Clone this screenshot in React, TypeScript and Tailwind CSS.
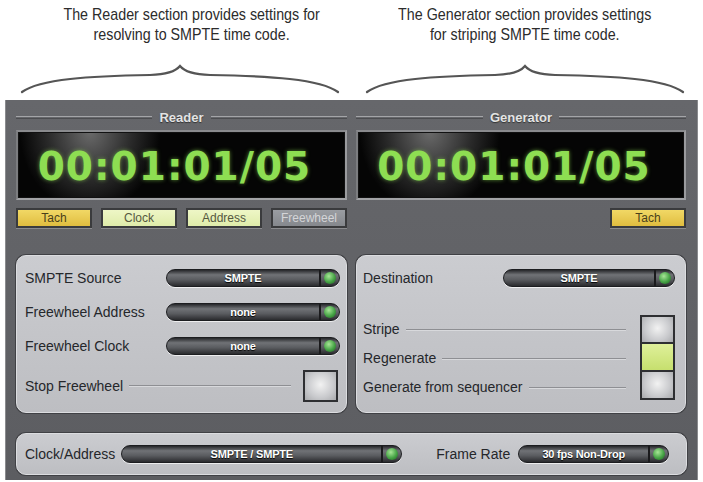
import React from "react";

const Popup = ({ value, className }: { value: string; className: string }) => (
  <div
    className={
      "flex h-[18px] items-center rounded-full border border-[#1c1d20] bg-[linear-gradient(#26272a,#707276_30%,#5a5c60_60%,#2a2b2e)] shadow-[0_1px_0_rgba(255,255,255,0.7)] " +
      className
    }
  >
    <span className="flex-1 text-center text-[11px] font-bold leading-none tracking-[-0.2px] text-white [text-shadow:0_1px_1px_#000]">
      {value}
    </span>
    <div className="h-full w-[2px] bg-[#1a1a1c]" />
    <div className="mx-[3px] h-[12px] w-[12px] rounded-full bg-[radial-gradient(circle_at_40%_35%,#a7e596,#45a345_55%,#1f5a1f)]" />
  </div>
);

const SectionTitle = ({ title }: { title: string }) => (
  <div className="flex h-[14px] items-center gap-[7px]">
    <div className="h-[3px] flex-1 border-t border-b border-t-[#a4a5a8] border-b-[#4c4d50]" />
    <span className="text-[13px] font-bold leading-none text-[#e4e4e4] [text-shadow:0_1px_1px_#333]">
      {title}
    </span>
    <div className="h-[3px] flex-1 border-t border-b border-t-[#a4a5a8] border-b-[#4c4d50]" />
  </div>
);

const Display = () => (
  <div className="flex h-[70px] items-center justify-center border-2 border-t-[#8a8b8e] border-l-[#7c7d80] border-r-[#9a9b9e] border-b-[#a2a3a6] bg-[radial-gradient(ellipse_70px_80px_at_22%_0%,#6a6a6a,#2a2a2a_60%,#050505_100%)] shadow-[inset_0_0_0_1px_#111]">
    <span className="mr-[14px] pt-[2px] font-['DejaVu_Sans',sans-serif] text-[39px] font-bold leading-none tracking-[1px] text-[#8ede52] [text-shadow:0_0_4px_rgba(140,220,80,0.6)]">
      00:01:01/05
    </span>
  </div>
);

const Ind = ({ label, className }: { label: string; className: string }) => (
  <div
    className={
      "flex h-[20px] items-center justify-center border-2 border-[#3a3b3d] text-[12px] leading-none shadow-[0_1px_0_rgba(255,255,255,0.25)] " +
      className
    }
  >
    {label}
  </div>
);

const Line = () => <div className="mx-[6px] h-[2px] flex-1 border-t border-b border-t-[#8e8f93] border-b-[#d8d9dc]" />;

const Check = ({ className }: { className: string }) => (
  <div className={"border-2 border-[#2e2f32] " + className} />
);

const Brace = () => (
  <svg width="320" height="30" viewBox="0 0 320 30" className="block">
    <path
      d="M2,28 C20,15 70,12 130,11 C148,10.5 156,7 160,2 C164,7 172,10.5 190,11 C250,12 300,15 318,28"
      fill="none"
      stroke="#555"
      strokeWidth="2.2"
      strokeLinecap="round"
    />
  </svg>
);

export default function App() {
  return (
    <div className="h-[482px] w-[703px] overflow-hidden bg-white font-['Liberation_Sans',Arial,sans-serif]">
      {/* captions */}
      <div className="flex h-[100px] gap-[27px] px-[20px] pt-[5px]">
        <div className="flex w-[320px] flex-col items-center">
          <div className="ml-[24px] h-[42px] scale-x-[0.84] whitespace-nowrap text-center text-[17px] leading-[20px] text-[#2c2c2c]">
            The Reader section provides settings for
            <br />
            resolving to SMPTE time code.
          </div>
          <div className="mt-[17px]">
            <Brace />
          </div>
        </div>
        <div className="flex w-[316px] flex-col items-center">
          <div className="h-[42px] scale-x-[0.84] whitespace-nowrap text-center text-[17px] leading-[20px] text-[#2c2c2c]">
            The Generator section provides settings
            <br />
            for striping SMPTE time code.
          </div>
          <div className="mt-[17px]">
            <Brace />
          </div>
        </div>
      </div>

      {/* main panel */}
      <div className="mx-[5px] flex h-[380px] flex-col border-l border-r border-[#8a8b8e] bg-[linear-gradient(#66676b,#5c5d61)] px-[10px] pt-[10px]">
        <div className="grid grid-cols-[331px_330px] gap-[9px]">
          {/* Reader */}
          <div className="flex flex-col">
            <SectionTitle title="Reader" />
            <div className="mt-[6px]">
              <Display />
            </div>
            <div className="mt-[8px] grid grid-cols-4 gap-[9px]">
              <Ind label="Tach" className="bg-[linear-gradient(#f1d866,#e0bd3f)] text-[#4a3f1a]" />
              <Ind label="Clock" className="bg-[linear-gradient(#eef6c6,#dfecaa)] text-[#55583f]" />
              <Ind label="Address" className="bg-[linear-gradient(#eef6c6,#dfecaa)] text-[#55583f]" />
              <Ind label="Freewheel" className="bg-[linear-gradient(#9a9da2,#85888d)] text-[#d4d5d8]" />
            </div>
          </div>
          {/* Generator */}
          <div className="flex flex-col">
            <SectionTitle title="Generator" />
            <div className="mt-[6px]">
              <Display />
            </div>
            <div className="mt-[8px] flex justify-end">
              <Ind label="Tach" className="w-[76px] bg-[linear-gradient(#f1d866,#e0bd3f)] text-[#4a3f1a]" />
            </div>
          </div>
        </div>

        {/* settings panels */}
        <div className="mt-[27px] grid grid-cols-[331px_330px] gap-[9px]">
          <div className="flex h-[158px] flex-col rounded-[10px] border border-[#dcdde0] bg-[linear-gradient(#cbccd0,#bdbec2)] pl-[8px] pr-[6px] pt-[13px] text-[14px] text-[#25272b] shadow-[0_0_0_1px_#404145]">
            <div className="flex h-[18px] items-center">
              <span className="flex-1">SMPTE Source</span>
              <Popup value="SMPTE" className="w-[174px]" />
            </div>
            <div className="mt-[16px] flex h-[18px] items-center">
              <span className="flex-1">Freewheel Address</span>
              <Popup value="none" className="w-[174px]" />
            </div>
            <div className="mt-[16px] flex h-[18px] items-center">
              <span className="flex-1">Freewheel Clock</span>
              <Popup value="none" className="w-[174px]" />
            </div>
            <div className="mt-[15px] flex h-[32px] items-center">
              <span>Stop Freewheel</span>
              <Line />
              <Check className="mr-[2px] ml-[6px] h-[32px] w-[35px] bg-[radial-gradient(circle_at_50%_45%,#f2f2f2,#c9cacd_60%,#a9aaad)]" />
            </div>
          </div>

          <div className="flex h-[158px] flex-col rounded-[10px] border border-[#dcdde0] bg-[linear-gradient(#cbccd0,#bdbec2)] pl-[6px] pr-[10px] pt-[13px] text-[14px] text-[#25272b] shadow-[0_0_0_1px_#404145]">
            <div className="flex h-[18px] items-center">
              <span className="flex-1">Destination</span>
              <Popup value="SMPTE" className="w-[172px]" />
            </div>
            <div className="mt-[28px] flex">
              <div className="flex flex-1 flex-col">
                <div className="flex h-[29px] items-center">
                  <span>Stripe</span>
                  <Line />
                </div>
                <div className="flex h-[29px] items-center">
                  <span>Regenerate</span>
                  <Line />
                </div>
                <div className="flex h-[29px] items-center">
                  <span>Generate from sequencer</span>
                  <Line />
                </div>
              </div>
              <div className="ml-[8px] flex w-[35px] flex-col">
                <Check className="h-[29px] bg-[radial-gradient(circle_at_50%_45%,#f2f2f2,#c9cacd_60%,#a9aaad)]" />
                <Check className="-mt-[2px] h-[30px] bg-[linear-gradient(#dff09a,#c6df6e)]" />
                <Check className="-mt-[2px] h-[30px] bg-[radial-gradient(circle_at_50%_45%,#f2f2f2,#c9cacd_60%,#a9aaad)]" />
              </div>
            </div>
          </div>
        </div>

        {/* bottom panel */}
        <div className="mt-[20px] flex h-[42px] items-center rounded-[10px] border border-[#dcdde0] bg-[linear-gradient(#cbccd0,#bdbec2)] pl-[8px] pr-[8px] text-[14px] text-[#25272b] shadow-[0_0_0_1px_#404145]">
          <span>Clock/Address</span>
          <Popup value="SMPTE / SMPTE" className="ml-[6px] w-[281px]" />
          <span className="ml-[34px]">Frame Rate</span>
          <Popup value="30 fps Non-Drop" className="ml-[8px] w-[151px]" />
        </div>
      </div>
    </div>
  );
}
